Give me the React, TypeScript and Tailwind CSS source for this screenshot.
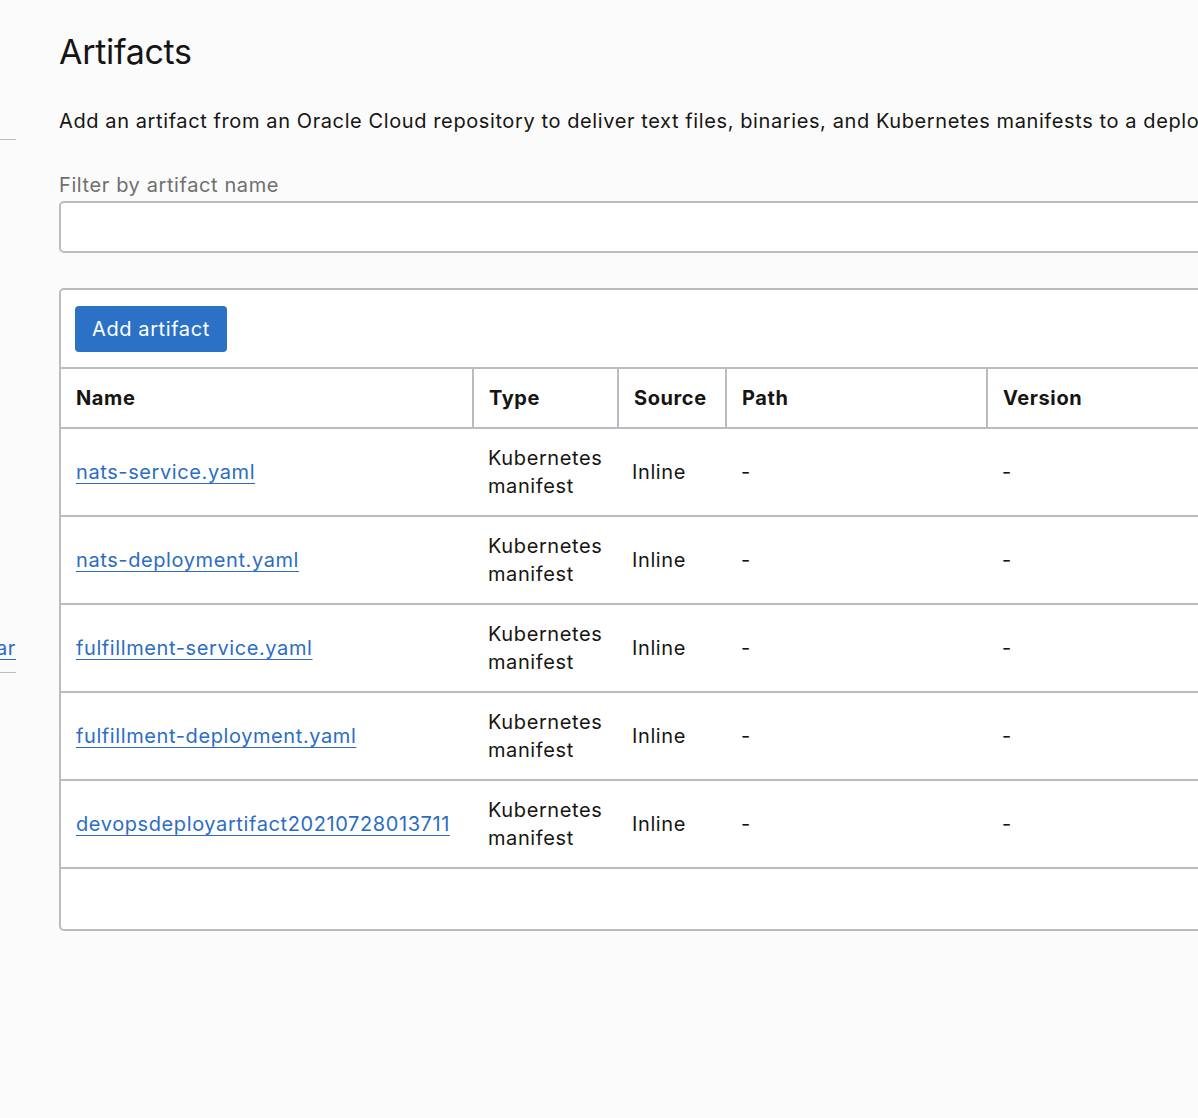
import React from 'react';

interface Artifact {
  name: string;
  type: string;
  source: string;
  path: string;
  version: string;
}

const artifacts: Artifact[] = [
  { name: 'nats-service.yaml', type: 'Kubernetes manifest', source: 'Inline', path: '-', version: '-' },
  { name: 'nats-deployment.yaml', type: 'Kubernetes manifest', source: 'Inline', path: '-', version: '-' },
  { name: 'fulfillment-service.yaml', type: 'Kubernetes manifest', source: 'Inline', path: '-', version: '-' },
  { name: 'fulfillment-deployment.yaml', type: 'Kubernetes manifest', source: 'Inline', path: '-', version: '-' },
  { name: 'devopsdeployartifact20210728013711', type: 'Kubernetes manifest', source: 'Inline', path: '-', version: '-' },
];

function Sidebar() {
  // only the right edge of the nav is visible
  return (
    <div className="w-[16px] shrink-0 overflow-hidden">
      <div className="w-[200px] ml-[-184px]">
        <div className="h-[140px] border-b border-[#b9bcc0]" />
        <div className="h-[483px]" />
        <div className="h-[50px] flex items-center justify-end border-b border-[#b9bcc0]">
          <a className="text-[#2b6dc4] underline underline-offset-[4px] decoration-1">Calendar</a>
        </div>
      </div>
    </div>
  );
}

export default function App() {
  return (
    <div
      className="min-h-[1118px] w-[1198px] overflow-hidden bg-[#fbfbfb] text-[#161513] flex text-[20px] tracking-[0.6px]"
      style={{ fontFamily: 'Inter, "Noto Sans", sans-serif' }}
    >
      <Sidebar />
      <main className="ml-[43px] w-[1300px] shrink-0">
        <h1 className="text-[34px] leading-[40px] font-normal pt-[32px] tracking-[-0.3px]">Artifacts</h1>
        <p className="mt-[35px] leading-[28px] whitespace-nowrap">
          Add an artifact from an Oracle Cloud repository to deliver text files, binaries, and Kubernetes manifests to a deployment environment.
        </p>
        <label className="block mt-[38px] text-[#6f6f6f] leading-[24px]">Filter by artifact name</label>
        <input className="block mt-[4px] w-full h-[52px] bg-white border-2 border-[#b9bcc0] rounded-[5px]" />

        <div className="mt-[35px] bg-white border-2 border-[#b9bcc0] rounded-[5px]">
          <div className="h-[77px] flex items-center px-[14px]">
            <button className="h-[46px] px-[17px] bg-[#2b72c7] text-white rounded-[4px] leading-none">
              Add artifact
            </button>
          </div>
          <table className="w-full border-collapse">
            <thead>
              <tr className="h-[60px] border-y-2 border-[#b9bcc0] text-left">
                <th className="w-[412px] pl-[15px] font-bold">Name</th>
                <th className="w-[145px] pl-[15px] font-bold border-l-2 border-[#b9bcc0]">Type</th>
                <th className="w-[108px] pl-[15px] font-bold border-l-2 border-[#b9bcc0]">Source</th>
                <th className="w-[261px] pl-[15px] font-bold border-l-2 border-[#b9bcc0]">Path</th>
                <th className="pl-[15px] font-bold border-l-2 border-[#b9bcc0]">Version</th>
              </tr>
            </thead>
            <tbody>
              {artifacts.map((a) => (
                <tr key={a.name} className="h-[88px] border-b-2 border-[#b9bcc0]">
                  <td className="pl-[15px]">
                    <a className="text-[#2b6dc4] underline underline-offset-[4px] decoration-1 cursor-pointer">{a.name}</a>
                  </td>
                  <td className="pl-[15px] leading-[28px] pr-[4px]">{a.type}</td>
                  <td className="pl-[14px]">{a.source}</td>
                  <td className="pl-[15px]">{a.path}</td>
                  <td className="pl-[15px]">{a.version}</td>
                </tr>
              ))}
            </tbody>
          </table>
          <div className="h-[60px]" />
        </div>
      </main>
    </div>
  );
}
